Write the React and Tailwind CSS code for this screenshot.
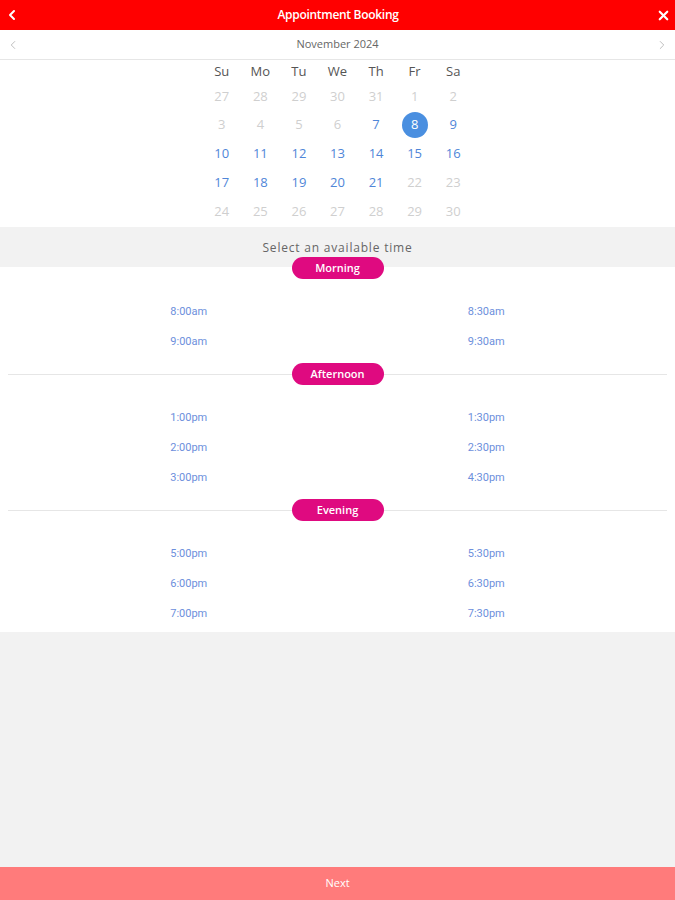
import React from 'react';
import { ChevronLeft, ChevronRight, X } from 'lucide-react';

// calendar cells: [day, state] state: 0 = greyed, 1 = available, 2 = selected
const weeks = [
    [[27, 0], [28, 0], [29, 0], [30, 0], [31, 0], [1, 0], [2, 0]],
    [[3, 0], [4, 0], [5, 0], [6, 0], [7, 1], [8, 2], [9, 1]],
    [[10, 1], [11, 1], [12, 1], [13, 1], [14, 1], [15, 1], [16, 1]],
    [[17, 1], [18, 1], [19, 1], [20, 1], [21, 1], [22, 0], [23, 0]],
    [[24, 0], [25, 0], [26, 0], [27, 0], [28, 0], [29, 0], [30, 0]],
];

const dayNames = ['Su', 'Mo', 'Tu', 'We', 'Th', 'Fr', 'Sa'];

const periods = [
    { name: 'Morning', slots: ['8:00am', '8:30am', '9:00am', '9:30am'] },
    { name: 'Afternoon', slots: ['1:00pm', '1:30pm', '2:00pm', '2:30pm', '3:00pm', '4:30pm'] },
    { name: 'Evening', slots: ['5:00pm', '5:30pm', '6:00pm', '6:30pm', '7:00pm', '7:30pm'] },
];

const Pill = ({ name, line }) => (
    <div className="relative h-[22px] flex items-center justify-center">
        {line && <div className="absolute left-2 right-2 top-1/2 h-px bg-[#e6e6e6]"></div>}
        <div className="relative w-[92px] h-[22px] rounded-full bg-[#df0a80] text-white text-[11px] font-semibold flex items-center justify-center">
            {name}
        </div>
    </div>
);

const Period = ({ name, slots, first, last }) => (
    <div className={last ? 'pb-[3px]' : 'pb-[6px]'}>
        <div className={first ? '-mt-[10px]' : ''}>
            <Pill name={name} line={!first} />
        </div>
        <div className="grid grid-cols-2 px-[40px] pt-[18px]">
            {slots.map((s) => (
                <div key={s} className="h-[30px] flex items-center justify-center text-[11px] text-[#6d8fdc] font-['Roboto',sans-serif]">
                    {s}
                </div>
            ))}
        </div>
    </div>
);

export default function App() {
    return (
        <div className="min-h-screen flex flex-col bg-[#f2f2f2] font-['Open_Sans',sans-serif]">
            {/* Header */}
            <div className="h-[30px] bg-[#ff0000] flex items-center justify-between px-[4px] text-white">
                <ChevronLeft size={16} strokeWidth={3} />
                <span className="text-[12px] font-semibold tracking-tight">Appointment Booking</span>
                <X size={15} strokeWidth={3.5} />
            </div>

            {/* Month */}
            <div className="h-[30px] bg-white border-b border-[#e6e6e6] flex items-center justify-between px-[6px]">
                <ChevronLeft size={14} strokeWidth={1.5} className="text-[#b5b5b5]" />
                <span className="text-[11px] text-[#666]">November 2024</span>
                <ChevronRight size={14} strokeWidth={1.5} className="text-[#b5b5b5]" />
            </div>

            {/* Calendar */}
            <div className="bg-white pb-[1px] flex justify-center">
                <div className="w-[270px]">
                    <div className="grid grid-cols-7 h-[22px] items-center">
                        {dayNames.map((d) => (
                            <div key={d} className="text-center text-[13px] leading-[16px] text-[#555]">{d}</div>
                        ))}
                    </div>
                    {weeks.map((w, i) => (
                        <div key={i} className="grid grid-cols-7 h-[28.75px]">
                            {w.map(([d, st], j) => (
                                <div key={j} className="flex items-center justify-center">
                                    {st === 2 ? (
                                        <span className="w-[26px] h-[26px] rounded-full bg-[#4a8fe0] text-white text-[13px] flex items-center justify-center">{d}</span>
                                    ) : (
                                        <span className={st === 1 ? 'text-[13px] text-[#4f86d8]' : 'text-[13px] text-[#cfcfcf]'}>{d}</span>
                                    )}
                                </div>
                            ))}
                        </div>
                    ))}
                </div>
            </div>

            {/* Select time band */}
            <div className="h-[40px] pt-[2px] flex items-center justify-center text-[12px] tracking-[0.8px] text-[#666]">
                Select an available time
            </div>

            {/* Time slots */}
            <div className="bg-white">
                {periods.map((p, i) => (
                    <Period key={p.name} name={p.name} slots={p.slots} first={i === 0} last={i === periods.length - 1} />
                ))}
            </div>

            <div className="flex-1"></div>

            {/* Next */}
            <div className="h-[33px] bg-[#ff7b7b] flex items-center justify-center text-white text-[11px]">
                Next
            </div>
        </div>
    );
}
